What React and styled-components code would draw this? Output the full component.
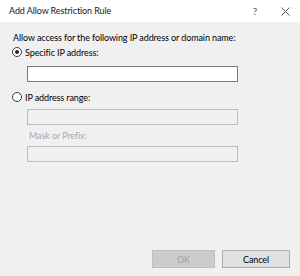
import React from 'react'
import styled, { createGlobalStyle } from 'styled-components'

const GlobalStyle = createGlobalStyle`
  html, body {
    margin: 0;
    padding: 0;
    background: #f0f0f0;
  }
  * {
    box-sizing: border-box;
  }
`

const Dialog = styled.div`
  width: 300px;
  height: 276px;
  display: flex;
  flex-direction: column;
  background: #f0f0f0;
  font-family: Lato, 'Noto Sans', sans-serif;
  font-size: 9px;
  letter-spacing: -0.1px;
  color: #000;
  overflow: hidden;
`

const TitleBar = styled.div`
  height: 22px;
  flex: none;
  display: flex;
  align-items: center;
  background: #fff;
  padding-left: 9px;
`

const Title = styled.div`
  flex: 1;
  line-height: 14px;
  color: #1a1a1a;
`

const TitleButton = styled.div`
  width: 30px;
  height: 22px;
  display: flex;
  align-items: center;
  justify-content: center;
  color: #555;
  font-size: 10px;
`

const Body = styled.div`
  flex: 1;
  display: flex;
  flex-direction: column;
  padding: 9px 10px 8px 12px;
`

const Prompt = styled.div`
  line-height: 14px;
  padding-left: 1px;
`

const RadioRow = styled.label`
  display: flex;
  align-items: center;
  height: 14px;
  margin-top: ${p => p.gap || 0}px;
`

const RadioCircle = styled.span`
  width: 10px;
  height: 10px;
  border-radius: 50%;
  border: 1px solid #3a3a3a;
  background: #fff;
  display: flex;
  align-items: center;
  justify-content: center;
  margin-right: 3px;

  &::after {
    content: '';
    display: ${p => (p.checked ? 'block' : 'none')};
    width: 4px;
    height: 4px;
    border-radius: 50%;
    background: #222;
  }
`

const TextBox = styled.div`
  width: 211px;
  height: 16px;
  margin-left: 15px;
  margin-top: ${p => p.gap}px;
  border: 1px solid ${p => (p.disabled ? '#bcbcbc' : '#7a7a7a')};
  background: ${p => (p.disabled ? '#f0f0f0' : '#fff')};
`

const FieldLabel = styled.div`
  line-height: 14px;
  margin-left: 17px;
  margin-top: 4px;
  color: #a8a8a8;
`

const Footer = styled.div`
  margin-top: auto;
  display: flex;
  justify-content: flex-end;
  gap: 7px;
`

const Button = styled.div`
  width: ${p => p.w}px;
  height: 18px;
  display: flex;
  align-items: center;
  justify-content: center;
  border: 1px solid ${p => (p.disabled ? '#bfbfbf' : '#adadad')};
  background: ${p => (p.disabled ? '#cccccc' : '#e1e1e1')};
  color: ${p => (p.disabled ? '#a0a0a0' : '#000')};
`

export default function App() {
  return (
    <>
      <GlobalStyle />
      <Dialog>
        <TitleBar>
          <Title>Add Allow Restriction Rule</Title>
          <TitleButton>?</TitleButton>
          <TitleButton>
            <svg width="9" height="9" viewBox="0 0 9 9">
              <path d="M0.5 0.5 L8.5 8.5 M8.5 0.5 L0.5 8.5" stroke="#555" strokeWidth="1" fill="none" />
            </svg>
          </TitleButton>
        </TitleBar>
        <Body>
          <Prompt>Allow access for the following IP address or domain name:</Prompt>
          <RadioRow>
            <RadioCircle checked />
            Specific IP address:
          </RadioRow>
          <TextBox gap={7} />
          <RadioRow gap={8}>
            <RadioCircle />
            IP address range:
          </RadioRow>
          <TextBox gap={5} disabled />
          <FieldLabel>Mask or Prefix:</FieldLabel>
          <TextBox gap={3} disabled />
          <Footer>
            <Button w={63} disabled>OK</Button>
            <Button w={68}>Cancel</Button>
          </Footer>
        </Body>
      </Dialog>
    </>
  )
}
